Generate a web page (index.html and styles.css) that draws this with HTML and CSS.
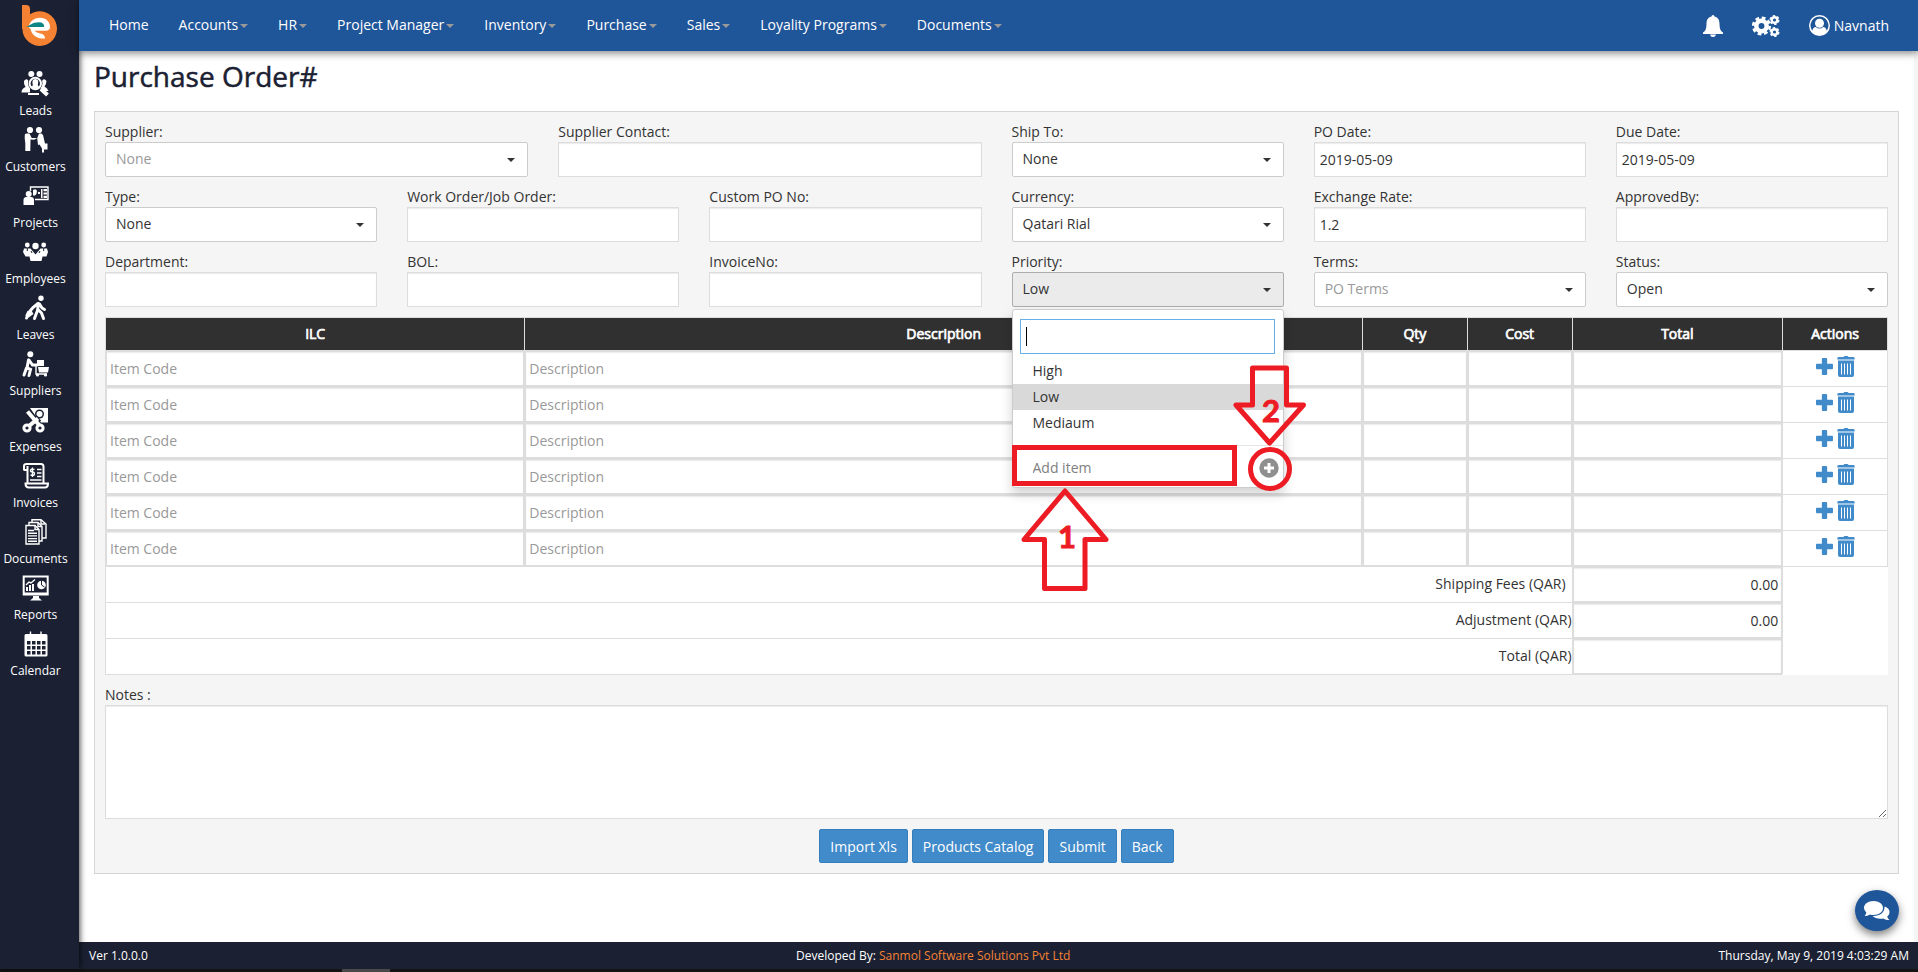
FILE: index.html
```html
<!DOCTYPE html>
<html lang="en">
<head>
<meta charset="utf-8">
<title>Purchase Order</title>
<link rel="stylesheet" href="styles.css">
</head>
<body>
<svg class="defs" width="0" height="0" aria-hidden="true">
  <symbol id="plus" viewBox="0 0 18 18"><path d="M7.200 0h3.600q1 0 1 1v5.200h5.200q1 0 1 1v3.600q0 1-1 1h-5.200v5.200q0 1-1 1h-3.600q-1 0-1-1v-5.200h-5.200q-1 0-1-1v-3.600q0-1 1-1h5.200v-5.200q0-1 1-1z"/></symbol>
  <symbol id="trash" viewBox="0 0 18 22"><path fill-rule="evenodd" d="M5.500 1h1q.3-1 1.300-1h2.400q1 0 1.300 1h5q1.200 0 1.200 1.500v1h-17.400v-1q0-1.500 1.200-1.500zM1 4.500h16v14.500q0 2-2 2h-12q-2 0-2-2zM4 7.500v11h1v-11zM7 7.500v11h1v-11zM10 7.500v11h1v-11zM13 7.500v11h1v-11z"/></symbol>
</svg>
<div class="app">
  <aside class="sidebar">
    <a class="logo" href="#" aria-label="Dashboard">
      <svg width="36" height="42" viewBox="0 0 36 42"><path fill="#f58233" d="M0 0h4q4 0 4 4v5.300a17.300 17.300 0 1 1-7.600 14.500L0 24z"/><path fill="#fff" d="M6.500 22C8 15.500 13 12.800 18 12.800c6 0 10 4 10 9.200 0 2.500-1.500 3.700-4 3.700H12.500c2 2 4.500 2.200 7 3 2.500.9 3.500 2.500 3.500 4.800-7 .5-12.500-2-14.500-9.500z"/><path fill="#0d8587" d="M4 22c4-1 5.500-4.700 13-4.700 3.500 0 5.200 1.500 5.200 4.700z"/></svg>
    </a>
    <nav class="side-nav">
      <a href="#"><svg viewBox="0 0 29 28"><circle cx="10.300" cy="4" r="3"/><circle cx="18.500" cy="4" r="3"/><path d="M3 11q2-3 4-1l2 8v4.500H.500q0-4 4-5.500-2-3-1.500-6zM25.500 11q-2-3-4-1l-2 8v3h8q-1-3-4-4.500 2-3 2-5.500z"/><circle class="cut" cx="14.300" cy="13.500" r="7.200"/><circle class="line2" cx="14.300" cy="13.500" r="5.700"/><path d="M14.300 9c3 0 3.500 3 2.500 5.500 0 1.500 1 2 2 2.500q-4.500 3.500-9 0c1-.5 2-1 2-2.500C11 12 11.500 9 14.300 9z"/><path class="line4" d="M20 19l6.500 6"/><path class="line2" d="M7 24h11"/></svg><span>Leads</span></a>
      <a href="#"><svg viewBox="0 0 29 28"><circle cx="9" cy="4" r="3.100"/><circle cx="18" cy="4" r="3.100"/><path d="M5.500 7.500h3l2.200 4.500h5.600l1.700-4.500h2.500l1.500 1.500 2 8.500h2.500v6h-3.500v3h-2v-4l-2.500-4-1.500 0.500-.8-7-3 1.800-3.700-.300-.2 11.500h-5v-8q-1-6-.3-9z"/></svg><span>Customers</span></a>
      <a href="#"><svg viewBox="0 0 29 28"><path class="line" d="M9.500 9V5h17.500v12.500H14"/><circle cx="7.700" cy="12" r="3"/><path d="M2.500 23v-5q0-3 3-3h4.500q3 0 3 3v5zM12 8q3-2 4 1 0 3-2 4.500h-2zM17 10h2v2h-2zM20 7h1.500v9H20zM22.500 7H26v2.200h-3.500zM22.500 10.400H26v2.200h-3.500zM22.500 13.800H26V16h-3.500z"/></svg><span>Projects</span></a>
      <a href="#"><svg viewBox="0 0 29 28"><circle cx="6.300" cy="7" r="2.400"/><circle cx="22.700" cy="7" r="2.400"/><circle cx="14.500" cy="8" r="3.200"/><path d="M2 14l1-3.500h6.500l2.500 3 2.500 3 2.500-3 2.500-3h6.500l1 3.500-1.500 4.500h-4l-1 4.500h-11l-1-4.500h-4z"/><path class="cutline" d="M14.500 12v4M6.300 10v3M22.700 10v3M10 13l1 2M19 13l-1 2"/></svg><span>Employees</span></a>
      <a href="#"><svg viewBox="0 0 29 28"><circle cx="20" cy="4.300" r="2.700"/><path class="line3" d="M17.500 9.500l-1 7-3 8M17 15.500l3.500 3.500 2 5.500M17 9.500l-5 4-2.500 3M18.500 10l2.500 4 2.500 1.500"/><path d="M6.500 17l3.500-1.500 2.500 4.500-5.500 4q-3-.5-2.500-3z"/><circle cx="5.500" cy="24" r="1.500"/></svg><span>Leaves</span></a>
      <a href="#"><svg viewBox="0 0 29 28"><circle cx="9.300" cy="4.200" r="3"/><path d="M16 10h7v6h-7zM17 17h11l-1 5.500h-9z"/><path class="line3" d="M7.500 10L6 18l3.500 1.500-1.500 6M5.500 18l-2.500 7M8 10l3.500 5H16"/><path class="line" d="M15 14v10h11"/><circle cx="16.500" cy="25" r="1.600"/><circle cx="24.500" cy="25" r="1.600"/></svg><span>Suppliers</span></a>
      <a href="#"><svg viewBox="0 0 29 28"><path d="M9 2h18v14.500h-8z"/><circle class="cut" cx="18.500" cy="8" r="4.500"/><circle cx="18.500" cy="8" r="3"/><path class="cutline6" d="M6 5l12 15M18 12l-10 8"/><path class="line4" d="M6.500 5.500l12 14M17 12.500L8 20"/><circle class="line3" cx="6" cy="22" r="3.100"/><circle class="line3" cx="19" cy="22" r="3.100"/></svg><span>Expenses</span></a>
      <a href="#"><svg viewBox="0 0 29 28"><path class="line2" d="M3 8.500V4q0-2 2.500-2H20q2.500 0 2.500 2.500V21M3 8h3.500V4M6.500 8v13M4.500 21.500h22.500q0 4-3 4H8q-3.500 0-3.500-4z"/><path class="line" d="M16 7.500h4.500M16 11h4.500M16 14.500h4.500M9 18h11.500M13.500 7.500q-4-1-4 1 0 1.500 2 1.500t2 2q0 2-4 1M11.500 5.500v9.500"/></svg><span>Invoices</span></a>
      <a href="#"><svg viewBox="0 0 29 28"><path class="line" d="M5 7.500h9l4 4V26H5zM8 7V4.500h9l4 4V23h-3M11 4V1.700h9L25 6v14h-4"/><path class="line" d="M7 12.500h6M7 15.200h9M7 17.900h9M7 20.600h9M7 23.300h9M14 7.500v4h4M17 4.500v4h4M20 2v4h4"/></svg><span>Documents</span></a>
      <a href="#"><svg viewBox="0 0 29 28"><path fill-rule="evenodd" d="M1.700 1.500h26v20h-26zM3.700 3.500v15h22v-15zM12 21h6v3l3 2.500H9l3-2.500z"/><circle cx="20.500" cy="11" r="4.300"/><path class="line2" d="M6 17v-4M9 17v-6M12 17v-7"/><path class="line" d="M5 11l3-3 2 1 4-3.500"/><path class="cutline" d="M20.500 6v5l3 2"/></svg><span>Reports</span></a>
      <a href="#"><svg viewBox="0 0 29 28"><path fill-rule="evenodd" d="M5 4h20q1.500 0 1.500 1.500V25q0 1.500-1.500 1.500H5Q3.500 26.500 3.500 25V5.500Q3.500 4 5 4zM6 11v3.500h3.500V11zM11 11v3.500h3.500V11zM16 11v3.500h3.500V11zM21 11v3.500h3.500V11zM6 16v3.500h3.500V16zM11 16v3.500h3.500V16zM16 16v3.500h3.500V16zM21 16v3.500h3.500V16zM6 21v3.500h3.500V21zM11 21v3.500h3.500V21zM16 21v3.500h3.500V21zM21 21v3.500h3.500V21z"/><path class="line" d="M9.500 1.500v5M20 1.500v5"/></svg><span>Calendar</span></a>
    </nav>
  </aside>

  <header class="topbar">
    <nav class="menu">
      <a href="#">Home</a>
      <a href="#" class="drop">Accounts</a>
      <a href="#" class="drop">HR</a>
      <a href="#" class="drop">Project Manager</a>
      <a href="#" class="drop">Inventory</a>
      <a href="#" class="drop">Purchase</a>
      <a href="#" class="drop">Sales</a>
      <a href="#" class="drop">Loyality Programs</a>
      <a href="#" class="drop">Documents</a>
    </nav>
    <div class="tools">
      <a href="#" aria-label="Notifications"><svg width="20" height="22" viewBox="0 0 20 22"><path fill="#fff" d="M8.500 1.500q0-1.500 1.500-1.500t1.500 1.500c4 1 5 4 5 7.500 0 4.500 1 7 3.500 8.500v1.500H0v-1.500C2.500 16 3.500 13.500 3.500 9c0-3.500 1-6.500 5-7.500zM7 19.500h6q-.5 2.500-3 2.500t-3-2.500z"/></svg></a>
      <a href="#" aria-label="Settings"><svg width="28" height="22" viewBox="0 0 28 22"><g fill="none" stroke="#fff"><circle cx="9.500" cy="11" r="5.200" stroke-width="4.500"/><circle cx="9.500" cy="11" r="8.300" stroke-width="2.600" stroke-dasharray="3.800 2.720"/><circle cx="22.500" cy="5" r="2.800" stroke-width="2.400"/><circle cx="22.500" cy="5" r="4.300" stroke-width="1.400" stroke-dasharray="2.400 2.100"/><circle cx="22.500" cy="17" r="2.800" stroke-width="2.400"/><circle cx="22.500" cy="17" r="4.300" stroke-width="1.400" stroke-dasharray="2.400 2.100"/></g></svg></a>
      <a href="#" class="user"><svg width="21" height="21" viewBox="0 0 1792 1792"><path fill="#fff" fill-rule="evenodd" d="M896 0a896 896 0 1 0 0 1792a896 896 0 1 0 0-1792zM1515 1351A768 768 0 1 0 277 1351q66-327 306-327 131 128 313 128t313-128q240 0 306 327z"/><circle fill="#fff" cx="896" cy="704" r="384"/></svg>Navnath</a>
    </div>
  </header>

  <main class="content">
    <h1>Purchase Order#</h1>
    <form class="panel" onsubmit="return false">
      <div class="fields">
        <div class="field wide"><label for="supplier">Supplier:</label><div class="select muted"><select id="supplier"><option>None</option></select></div></div>
        <div class="field wide"><label for="contact">Supplier Contact:</label><input id="contact" type="text"></div>
        <div class="field"><label for="ship">Ship To:</label><div class="select"><select id="ship"><option>None</option></select></div></div>
        <div class="field"><label for="podate">PO Date:</label><input id="podate" type="text" value="2019-05-09"></div>
        <div class="field"><label for="duedate">Due Date:</label><input id="duedate" type="text" value="2019-05-09"></div>

        <div class="field"><label for="type">Type:</label><div class="select"><select id="type"><option>None</option></select></div></div>
        <div class="field"><label for="work">Work Order/Job Order:</label><input id="work" type="text"></div>
        <div class="field"><label for="custom">Custom PO No:</label><input id="custom" type="text"></div>
        <div class="field"><label for="currency">Currency:</label><div class="select"><select id="currency"><option>Qatari Rial</option></select></div></div>
        <div class="field"><label for="rate">Exchange Rate:</label><input id="rate" type="text" value="1.2"></div>
        <div class="field"><label for="approved">ApprovedBy:</label><input id="approved" type="text"></div>

        <div class="field"><label for="dept">Department:</label><input id="dept" type="text"></div>
        <div class="field"><label for="bol">BOL:</label><input id="bol" type="text"></div>
        <div class="field"><label for="invoice">InvoiceNo:</label><input id="invoice" type="text"></div>
        <div class="field priority"><label for="priority">Priority:</label><div class="select open"><select id="priority"><option>Low</option><option>High</option><option>Mediaum</option></select></div>
          <div class="popup">
            <input class="search" type="text" value="" aria-label="Search priority">
            <span class="cursor"></span>
            <ul>
              <li>High</li>
              <li class="selected">Low</li>
              <li>Mediaum</li>
            </ul>
            <div class="add">
              <input type="text" placeholder="Add item" aria-label="Add item">
              <button type="button" aria-label="Add"><svg width="20" height="20" viewBox="0 0 20 20"><circle cx="10" cy="10" r="9.700" fill="#8f8f8f"/><path fill="none" stroke="#fff" stroke-width="3" d="M10 5v10M5 10h10"/></svg></button>
            </div>
          </div>
          <svg class="marks" width="320" height="240" viewBox="0 0 320 240" fill="none" stroke="#ed1c24" stroke-width="5">
            <rect x="23.500" y="85.500" width="220" height="36"/>
            <circle cx="279" cy="107" r="19.500"/>
            <path stroke-linejoin="round" d="M261.500 6h34v37h17l-34 38-33.500-38h16.500z"/>
            <path stroke-linejoin="round" d="M74 129l41 48.500h-21v49H53.500v-49H33z"/>
            <text x="271" y="60">2</text>
            <text x="67" y="186">1</text>
          </svg>
        </div>
        <div class="field"><label for="terms">Terms:</label><div class="select muted"><select id="terms"><option>PO Terms</option></select></div></div>
        <div class="field"><label for="status">Status:</label><div class="select"><select id="status"><option>Open</option></select></div></div>
      </div>

      <table class="items">
        <colgroup><col class="c4"><col class="c8"><col class="c1"><col class="c1"><col class="c2"><col class="c1"></colgroup>
        <thead><tr><th>ILC</th><th>Description</th><th>Qty</th><th>Cost</th><th>Total</th><th>Actions</th></tr></thead>
        <tbody>
          <tr><td><input type="text" placeholder="Item Code" aria-label="Item code 1"></td><td><input type="text" placeholder="Description" aria-label="Description 1"></td><td><input type="text" aria-label="Quantity 1"></td><td><input type="text" aria-label="Cost 1"></td><td><input type="text" aria-label="Total 1"></td><td class="act"><div><button type="button" aria-label="Add row"><svg width="17" height="17"><use href="#plus"/></svg></button><button type="button" aria-label="Delete row"><svg width="18" height="22"><use href="#trash"/></svg></button></div></td></tr>
          <tr><td><input type="text" placeholder="Item Code" aria-label="Item code 2"></td><td><input type="text" placeholder="Description" aria-label="Description 2"></td><td><input type="text" aria-label="Quantity 2"></td><td><input type="text" aria-label="Cost 2"></td><td><input type="text" aria-label="Total 2"></td><td class="act"><div><button type="button" aria-label="Add row"><svg width="17" height="17"><use href="#plus"/></svg></button><button type="button" aria-label="Delete row"><svg width="18" height="22"><use href="#trash"/></svg></button></div></td></tr>
          <tr><td><input type="text" placeholder="Item Code" aria-label="Item code 3"></td><td><input type="text" placeholder="Description" aria-label="Description 3"></td><td><input type="text" aria-label="Quantity 3"></td><td><input type="text" aria-label="Cost 3"></td><td><input type="text" aria-label="Total 3"></td><td class="act"><div><button type="button" aria-label="Add row"><svg width="17" height="17"><use href="#plus"/></svg></button><button type="button" aria-label="Delete row"><svg width="18" height="22"><use href="#trash"/></svg></button></div></td></tr>
          <tr><td><input type="text" placeholder="Item Code" aria-label="Item code 4"></td><td><input type="text" placeholder="Description" aria-label="Description 4"></td><td><input type="text" aria-label="Quantity 4"></td><td><input type="text" aria-label="Cost 4"></td><td><input type="text" aria-label="Total 4"></td><td class="act"><div><button type="button" aria-label="Add row"><svg width="17" height="17"><use href="#plus"/></svg></button><button type="button" aria-label="Delete row"><svg width="18" height="22"><use href="#trash"/></svg></button></div></td></tr>
          <tr><td><input type="text" placeholder="Item Code" aria-label="Item code 5"></td><td><input type="text" placeholder="Description" aria-label="Description 5"></td><td><input type="text" aria-label="Quantity 5"></td><td><input type="text" aria-label="Cost 5"></td><td><input type="text" aria-label="Total 5"></td><td class="act"><div><button type="button" aria-label="Add row"><svg width="17" height="17"><use href="#plus"/></svg></button><button type="button" aria-label="Delete row"><svg width="18" height="22"><use href="#trash"/></svg></button></div></td></tr>
          <tr><td><input type="text" placeholder="Item Code" aria-label="Item code 6"></td><td><input type="text" placeholder="Description" aria-label="Description 6"></td><td><input type="text" aria-label="Quantity 6"></td><td><input type="text" aria-label="Cost 6"></td><td><input type="text" aria-label="Total 6"></td><td class="act"><div><button type="button" aria-label="Add row"><svg width="17" height="17"><use href="#plus"/></svg></button><button type="button" aria-label="Delete row"><svg width="18" height="22"><use href="#trash"/></svg></button></div></td></tr>
        </tbody>
        <tfoot>
          <tr><td colspan="4" class="sum spaced"><label for="fees">Shipping Fees (QAR)</label></td><td><input id="fees" class="num" type="text" value="0.00"></td><td class="blank" rowspan="3"></td></tr>
          <tr><td colspan="4" class="sum"><label for="adjust">Adjustment (QAR)</label></td><td><input id="adjust" class="num" type="text" value="0.00"></td></tr>
          <tr><td colspan="4" class="sum"><label for="grand">Total (QAR)</label></td><td><input id="grand" class="num" type="text"></td></tr>
        </tfoot>
      </table>

      <div class="field notes"><label for="notes">Notes :</label><textarea id="notes"></textarea></div>
      <div class="actions">
        <button type="button">Import Xls</button>
        <button type="button">Products Catalog</button>
        <button type="submit">Submit</button>
        <button type="button">Back</button>
      </div>
    </form>
    <button class="chat" type="button" aria-label="Chat"><svg width="26" height="20" viewBox="0 0 26 20"><path fill="#fff" d="M9.500 0C15 0 19 3 19 7s-4 7-9.500 7q-2 0-3.500-.5Q3.500 15 .5 15q1.500-1.500 1.800-3.500Q0 9.500 0 7C0 3 4 0 9.500 0z"/><path fill="#fff" d="M20.500 5.500c3.500 1.200 5 3.200 5 5.500 0 2-1 3.500-2.300 4.500.3 1.500 1.300 2.500 2.300 3.500-2.500 0-4.500-.5-6-1.500-4.500 1-9-.5-11-2.500 7 .5 12.500-3.500 12-9.500z"/></svg></button>
  </main>

  <footer class="footer">
    <span>Ver 1.0.0.0</span>
    <span class="dev">Developed By: <a href="#">Sanmol Software Solutions Pvt Ltd</a></span>
    <span>Thursday, May 9, 2019 4:03:29 AM</span>
  </footer>
  <div class="strip"></div>
</div>
</body>
</html>
```

FILE: styles.css
```css
* { box-sizing: border-box; }
body {
  margin: 0;
  background: #fff;
  color: #333;
  font: 14px/20px "Open Sans", "Noto Sans", sans-serif;
}
a { color: inherit; text-decoration: none; }
input, select, button, textarea { font: inherit; color: inherit; margin: 0; }
button { cursor: pointer; }
.defs { position: absolute; }

.app {
  display: grid;
  grid-template-columns: 79px minmax(0, 1fr);
  grid-template-rows: 51px 1fr 27px 3px;
  min-height: 100vh;
}

/* Sidebar */
.sidebar {
  grid-row: 1 / 4;
  position: relative;
  z-index: 2;
  background: #1b2133;
  color: #fff;
  box-shadow: 1px 0 6px rgba(0, 0, 0, .7);
}
.logo { display: flex; justify-content: center; padding: 5px 0 0; }
.side-nav {
  display: flex;
  flex-direction: column;
  gap: 7px;
  width: 71px;
  padding-top: 23px;
  font-size: 12px;
  line-height: 16px;
}
.side-nav a { display: flex; flex-direction: column; align-items: center; gap: 5px; }
.side-nav svg { width: 29px; height: 28px; fill: #fff; }
.side-nav .line, .side-nav .line2, .side-nav .line3, .side-nav .line4 { fill: none; stroke: #fff; stroke-width: 1.4; }
.side-nav .line2 { stroke-width: 2; }
.side-nav .line3 { stroke-width: 3; stroke-linecap: round; }
.side-nav .line4 { stroke-width: 4; }
.side-nav .cut { fill: #1b2133; }
.side-nav .cutline, .side-nav .cutline6 { fill: none; stroke: #1b2133; stroke-width: 1; }
.side-nav .cutline6 { stroke-width: 7; }

/* Top bar */
.topbar {
  position: relative;
  z-index: 3;
  display: flex;
  justify-content: space-between;
  align-items: center;
  padding: 0 29px 0 15px;
  background: #1f5599;
  color: #fff;
  box-shadow: 0 2px 8px rgba(0, 0, 0, .5);
}
.menu { display: flex; padding-bottom: 2px; }
.menu a { padding: 0 15px; }
.drop::after {
  content: "";
  display: inline-block;
  margin-left: 2px;
  vertical-align: middle;
  border: 4px solid transparent;
  border-top-color: #999;
  border-bottom: 0;
}
.tools { display: flex; align-items: center; gap: 29px; }
.tools a { display: flex; align-items: center; gap: 4px; }

/* Content */
.content {
  position: relative;
  padding: 5px 15px 10px;
  border-right: 4px solid #f5f5f5;
}
h1 { margin: 0 0 15px; color: #1b2133; font-size: 28px; font-weight: 400; line-height: 40px; -webkit-text-stroke: 0.5px #1b2133; }
.panel { padding: 10px; border: 1px solid #d5d5d5; background: #f5f5f5; }
.fields { display: grid; grid-template-columns: repeat(12, minmax(0, 1fr)); gap: 10px 30px; }
.field { display: flex; flex-direction: column; grid-column: span 2; }
.wide { grid-column: span 3; }
.field > input, .select select {
  width: 100%;
  height: 35px;
  border: 1px solid #ddd;
  border-radius: 0;
  padding: 0 5px;
  background: #fff;
  box-shadow: inset 0 1px 1px rgba(0, 0, 0, .08);
  outline: 0;
}
.select { position: relative; }
.select select {
  appearance: none;
  display: block;
  padding: 0 30px 2px 10px;
  border-color: #ccc;
  border-radius: 2px;
  box-shadow: none;
}
.select::after {
  content: "";
  position: absolute;
  right: 13px;
  top: 16px;
  border: 4px solid transparent;
  border-top-color: #333;
  border-bottom: 0;
}
.muted select { color: #999; }
.open select { background: #ebebeb; border-color: #adadad; }
::placeholder { color: #999; opacity: 1; }

/* Open priority list */
.priority { position: relative; }
.popup {
  position: absolute;
  z-index: 5;
  top: 57px;
  left: 0;
  right: 0;
  padding: 9px 0 0;
  border: 1px solid #ccc;
  border-radius: 3px;
  background: #fff;
  box-shadow: 0 6px 12px rgba(0, 0, 0, .18);
}
.search {
  display: block;
  width: calc(100% - 15px);
  height: 35px;
  margin: 0 8px 0 7px;
  padding: 0 5px;
  border: 1px solid #66afe9;
  outline: 0;
}
.cursor { position: absolute; left: 13px; top: 17px; width: 1px; height: 19px; background: #000; }
.popup ul { margin: 4px 0 9px; padding: 0; list-style: none; line-height: 26px; }
.popup li { padding: 0 20px; }
.popup .selected { background: #d9d9d9; }
.add {
  display: flex;
  align-items: center;
  justify-content: space-between;
  height: 42px;
  padding: 3px 4px 0 20px;
  border-top: 1px solid #e5e5e5;
}
.add input { width: 150px; padding: 0; border: 0; background: none; }
.add input::placeholder { color: #808080; }
.add button { display: flex; padding: 0; border: 0; background: none; }
.marks { position: absolute; z-index: 6; left: -21px; top: 110px; pointer-events: none; }
.marks text { font: 700 31px Lato, sans-serif; fill: #ed1c24; stroke: #ed1c24; stroke-width: 1; }

/* Items table */
.items {
  width: 100%;
  margin-top: 10px;
  table-layout: fixed;
  border-collapse: collapse;
  background: #fff;
}
.c4 { width: 23.530%; }
.c8 { width: 47%; }
.c2 { width: 11.820%; }
.c1 { width: 5.880%; }
.items th, .items td { height: 36px; padding: 0; border: 1px solid #ddd; }
.items th {
  height: 33px;
  background: #303030;
  color: #fff;
  font-weight: 400;
  text-align: center;
  -webkit-text-stroke: 0.7px #fff;
}
.items input {
  display: block;
  width: 100%;
  height: 35px;
  padding: 0 3px;
  border: 1px solid #ddd;
  background: #fff;
  box-shadow: inset 0 1px 1px rgba(0, 0, 0, .08);
  outline: 0;
}
.items .num { text-align: right; }
.act div { display: flex; align-items: center; justify-content: center; gap: 4px; padding-bottom: 4px; }
.act button { display: flex; padding: 0; border: 0; background: none; }
.act svg { fill: #428bca; }
.items .sum { text-align: right; padding-bottom: 2px; }
.items .spaced { padding-right: 6px; }
.items .blank { border-right-color: #fff; border-bottom-color: #fff; }

.notes { margin-top: 10px; }
textarea {
  display: block;
  width: 100%;
  height: 114px;
  border: 1px solid #ddd;
  border-radius: 0;
  background: #fff;
  box-shadow: inset 0 1px 1px rgba(0, 0, 0, .08);
  resize: vertical;
  outline: 0;
}
.actions { display: flex; justify-content: center; gap: 4px; margin-top: 10px; }
.actions button {
  height: 34px;
  padding: 1px 10px 0;
  border: 1px solid #357ebd;
  border-radius: 2px;
  background: #428bca;
  color: #fff;
}
.chat {
  position: absolute;
  right: 15px;
  bottom: 11px;
  display: flex;
  align-items: center;
  justify-content: center;
  width: 44px;
  height: 41px;
  padding: 0;
  border: 0;
  border-radius: 50%;
  background: #1f5599;
  box-shadow: 0 4px 8px rgba(0, 0, 0, .5);
}

/* Footer */
.footer {
  display: flex;
  justify-content: space-between;
  align-items: center;
  padding: 0 9px 0 10px;
  background: #1b2133;
  color: #fff;
  font-size: 12px;
}
.dev a { color: #f58233; }
.strip {
  grid-column: 1 / 3;
  background: linear-gradient(90deg, #141414 342px, #484848 342px, #484848 390px, #141414 390px);
}
```
